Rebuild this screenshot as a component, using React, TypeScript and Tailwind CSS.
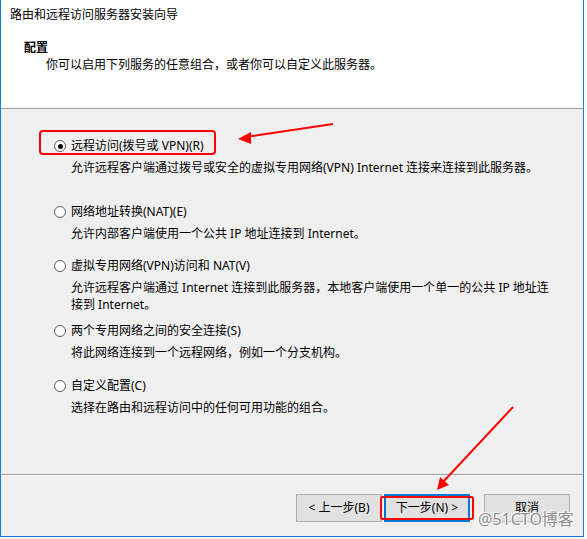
import React from "react";

function Radio({ checked }: { checked?: boolean }) {
  return (
    <span className="w-[12px] h-[12px] rounded-full border border-[#5a5a5a] bg-white flex items-center justify-center shrink-0">
      {checked && <span className="w-[5px] h-[5px] rounded-full bg-black" />}
    </span>
  );
}

function Option({
  label,
  desc,
  checked,
  className,
}: {
  label: string;
  desc: React.ReactNode;
  checked?: boolean;
  className: string;
}) {
  return (
    <div className={className}>
      <div className="flex items-center h-[16px] pl-[53px] gap-[5px]">
        <Radio checked={checked} />
        <span className="leading-[16px]">{label}</span>
      </div>
      <div className="pl-[70px] mt-[5px] leading-[17px]">{desc}</div>
    </div>
  );
}

function Btn({ children, focused }: { children: React.ReactNode; focused?: boolean }) {
  return (
    <button
      className={
        "h-[28px] w-[86px] bg-[#e1e1e1] text-black text-[12px] flex items-center justify-center " +
        (focused ? "border-2 border-[#0078d7]" : "border border-[#adadad]")
      }
    >
      {children}
    </button>
  );
}

export default function App() {
  return (
    <div className="relative w-[587px] h-[539px] bg-white text-[12px] text-black font-[family-name:'Noto_Sans','Noto_Sans_CJK_SC',sans-serif]">
      <div className="w-[584px] h-[537px] border-l border-r border-b border-[#1a7fd4] flex flex-col bg-[#f0f0f0]">
        {/* header */}
        <div className="h-[109px] bg-white border-b border-[#a0a0a0] shrink-0">
          <div className="pl-[9px] pt-[7px] leading-[16px]">路由和远程访问服务器安装向导</div>
          <div className="pl-[23px] mt-[17px] leading-[16px] font-bold">配置</div>
          <div className="pl-[45px] mt-[1px] leading-[16px]">
            你可以启用下列服务的任意组合，或者你可以自定义此服务器。
          </div>
        </div>
        {/* body */}
        <div className="h-[366px] border-b border-[#a0a0a0] shrink-0">
          <Option
            className="mt-[29px]"
            checked
            label="远程访问(拨号或 VPN)(R)"
            desc="允许远程客户端通过拨号或安全的虚拟专用网络(VPN) Internet 连接来连接到此服务器。"
          />
          <Option
            className="mt-[28px]"
            label="网络地址转换(NAT)(E)"
            desc="允许内部客户端使用一个公共 IP 地址连接到 Internet。"
          />
          <Option
            className="mt-[16px]"
            label="虚拟专用网络(VPN)访问和 NAT(V)"
            desc={
              <>
                允许远程客户端通过 Internet 连接到此服务器，本地客户端使用一个单一的公共 IP 地址连
                <br />
                接到 Internet。
              </>
            }
          />
          <Option
            className="mt-[10px]"
            label="两个专用网络之间的安全连接(S)"
            desc="将此网络连接到一个远程网络，例如一个分支机构。"
          />
          <Option
            className="mt-[17px]"
            label="自定义配置(C)"
            desc="选择在路由和远程访问中的任何可用功能的组合。"
          />
        </div>
        {/* footer */}
        <div className="flex-1 border-t border-white flex justify-end items-start pt-[18px] pr-[13px]">
          <div className="flex gap-[2px]">
            <Btn>&lt; 上一步(B)</Btn>
            <Btn focused>下一步(N) &gt;</Btn>
          </div>
          <div className="ml-[14px]">
            <Btn>取消</Btn>
          </div>
        </div>
      </div>

      {/* annotations */}
      <div className="absolute left-[39px] top-[130px] w-[177px] h-[25px] border-2 border-[#ff0000] rounded-[4px]" />
      <div className="absolute left-[380px] top-[496px] w-[94px] h-[24px] border-2 border-[#ff0000] rounded-[3px]" />
      <svg className="absolute left-0 top-0" width="587" height="539" viewBox="0 0 587 539">
        <line x1="333" y1="124" x2="246" y2="137" stroke="#ff0000" strokeWidth="2" />
        <polygon points="238,139 251,132 251,144" fill="#ff0000" />
        <line x1="513" y1="407" x2="443" y2="482" stroke="#ff0000" strokeWidth="2" />
        <polygon points="437,490 440,477 449,485" fill="#ff0000" />
      </svg>
      <span className="absolute left-[478px] top-[509px] text-[16px] leading-[20px] text-[#8a8a8a] [text-shadow:0_0_1px_#fff,0_0_2px_#fff,1px_1px_0_#fff,-1px_-1px_0_#fff]">
        @51CTO博客
      </span>
    </div>
  );
}
